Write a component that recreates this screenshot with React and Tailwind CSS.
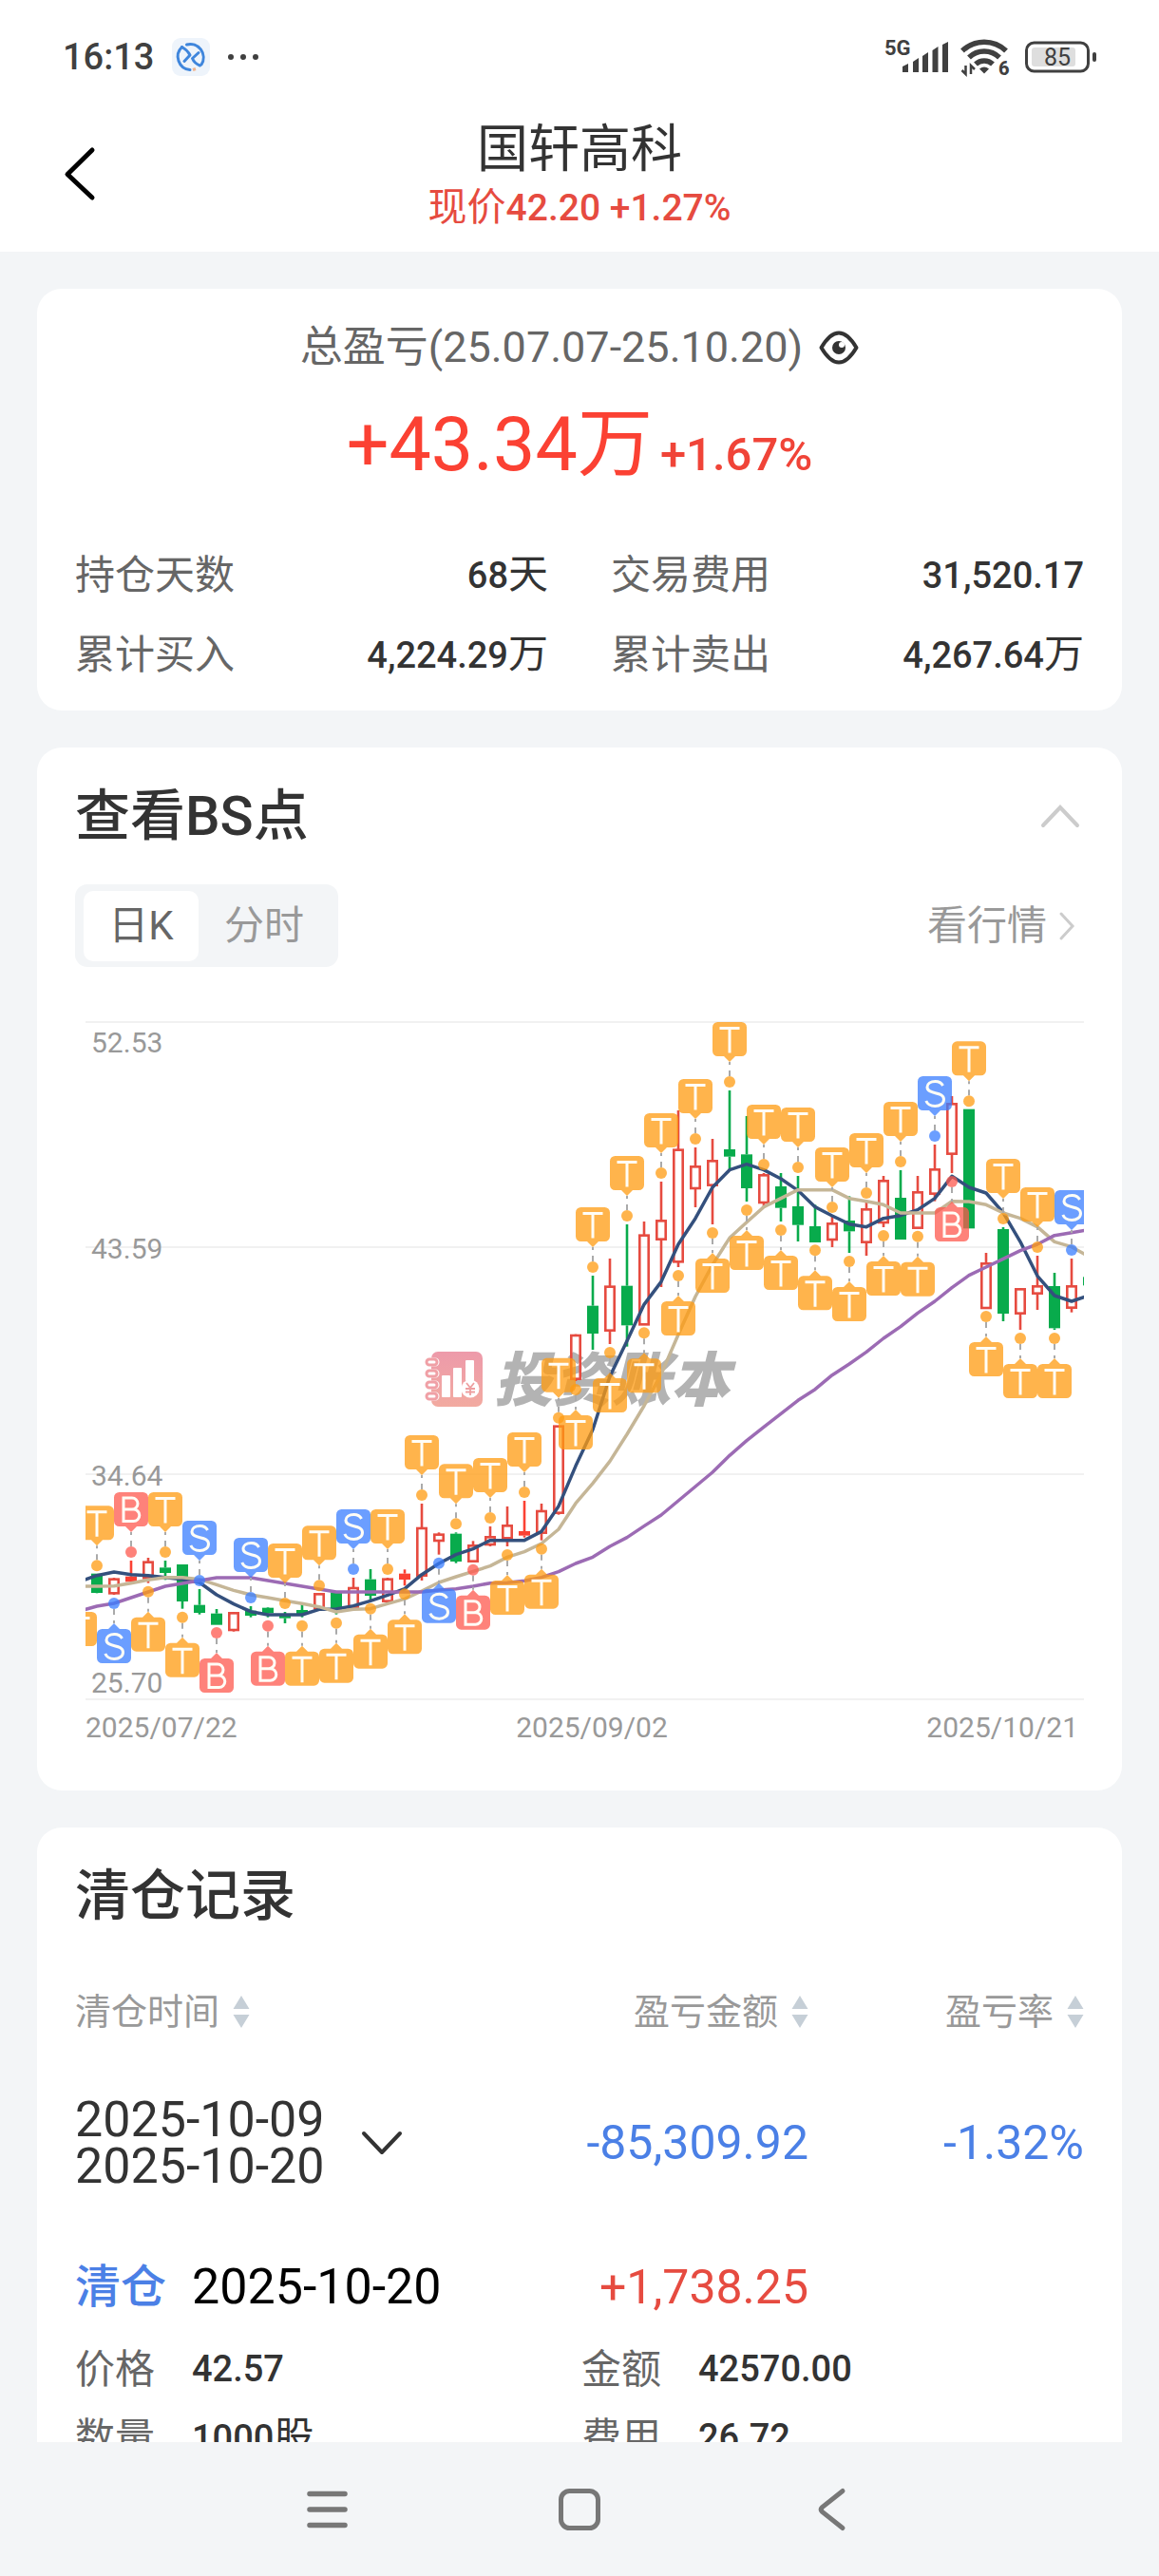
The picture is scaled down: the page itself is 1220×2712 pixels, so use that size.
import React from "react";

// Candle: [type, high, bodyTop, bodyBottom, low]; r = hollow rise, f = solid rise, g = fall.
// Vertical values are thirds of a pixel below the top of the plot.
const CANDLES = [
  ["g", 1792, 1790, 1851, 1852],
  ["r", 1803, 1808, 1852, 1857],
  ["f", 1749, 1799, 1816, 1816],
  ["r", 1740, 1754, 1804, 1820],
  ["g", 1749, 1771, 1788, 1810],
  ["g", 1761, 1761, 1878, 1901],
  ["g", 1839, 1889, 1914, 1919],
  ["g", 1902, 1916, 1952, 1950],
  ["r", 1911, 1915, 1968, 1973],
  ["g", 1893, 1907, 1923, 1928],
  ["g", 1896, 1898, 1915, 1928],
  ["g", 1911, 1923, 1931, 1947],
  ["g", 1887, 1905, 1920, 1928],
  ["r", 1855, 1855, 1900, 1908],
  ["g", 1848, 1850, 1910, 1919],
  ["r", 1803, 1836, 1897, 1900],
  ["g", 1776, 1808, 1860, 1874],
  ["r", 1803, 1808, 1877, 1882],
  ["f", 1777, 1790, 1809, 1828],
  ["r", 1569, 1647, 1796, 1812],
  ["r", 1660, 1667, 1686, 1730],
  ["g", 1660, 1664, 1752, 1757],
  ["r", 1687, 1702, 1751, 1751],
  ["r", 1641, 1675, 1698, 1704],
  ["r", 1578, 1639, 1678, 1704],
  ["f", 1560, 1656, 1670, 1676],
  ["r", 1569, 1593, 1661, 1685],
  ["r", 1325, 1325, 1598, 1604],
  ["r", 1034, 1038, 1175, 1182],
  ["g", 849, 944, 1032, 1083],
  ["r", 795, 884, 1022, 1065],
  ["g", 687, 881, 1006, 1073],
  ["r", 678, 722, 1003, 1003],
  ["r", 552, 676, 734, 885],
  ["r", 327, 452, 805, 822],
  ["r", 444, 505, 573, 633],
  ["r", 417, 487, 563, 687],
  ["g", 264, 450, 473, 515],
  ["g", 345, 466, 573, 615],
  ["r", 525, 532, 618, 630],
  ["g", 525, 567, 635, 678],
  ["g", 534, 630, 689, 741],
  ["g", 625, 693, 744, 742],
  ["r", 660, 685, 735, 759],
  ["g", 598, 675, 709, 777],
  ["r", 615, 640, 743, 786],
  ["r", 534, 550, 681, 696],
  ["g", 516, 603, 735, 735],
  ["r", 534, 586, 698, 698],
  ["r", 435, 514, 590, 614],
  ["r", 282, 307, 464, 525],
  ["g", 325, 323, 700, 700],
  ["r", 777, 811, 951, 951],
  ["g", 696, 702, 969, 993],
  ["r", 888, 892, 968, 1020],
  ["r", 786, 883, 905, 957],
  ["g", 840, 882, 1015, 1020],
  ["r", 795, 883, 950, 965],
  ["g", 853, 853, 880, 880],
];

const FAST = [1815, 1796, 1785, 1793, 1796, 1802, 1808, 1818, 1857, 1886, 1910, 1920, 1920, 1920, 1903, 1902, 1892, 1876, 1858, 1838, 1793, 1758, 1730, 1712, 1685, 1685, 1685, 1657, 1577, 1450, 1335, 1167, 1055, 940, 868, 750, 668, 570, 515, 497, 515, 543, 580, 632, 660, 686, 695, 668, 659, 641, 605, 535, 570, 588, 650, 742, 850, 912, 930, 912];
const MID = [1830, 1830, 1829, 1820, 1810, 1802, 1802, 1808, 1825, 1843, 1857, 1866, 1876, 1885, 1895, 1911, 1903, 1901, 1885, 1870, 1845, 1818, 1800, 1783, 1766, 1738, 1721, 1695, 1650, 1568, 1505, 1435, 1350, 1260, 1160, 1035, 915, 815, 730, 680, 632, 605, 578, 578, 578, 605, 614, 625, 651, 651, 651, 614, 615, 625, 651, 668, 695, 742, 758, 788];
const SLOW = [1908, 1893, 1884, 1866, 1848, 1830, 1821, 1812, 1803, 1803, 1803, 1812, 1821, 1830, 1839, 1848, 1848, 1848, 1848, 1848, 1848, 1842, 1838, 1830, 1820, 1819, 1813, 1802, 1784, 1758, 1738, 1704, 1676, 1640, 1605, 1560, 1515, 1470, 1417, 1370, 1327, 1285, 1243, 1208, 1163, 1128, 1090, 1047, 1010, 967, 930, 887, 848, 822, 796, 770, 750, 722, 713, 704];

const ABOVE = { 0: "T", 2: "B", 4: "T", 6: "S", 9: "S", 11: "T", 13: "T", 15: "S", 17: "T", 19: "T", 21: "T", 23: "T", 25: "T", 27: "T", 29: "T", 31: "T", 33: "T", 35: "T", 37: "T", 39: "T", 41: "T", 43: "T", 45: "T", 47: "T", 49: "S", 51: "T", 53: "T", 55: "T", 57: "S" };
const BELOW = { 1: "S", 3: "T", 5: "T", 7: "B", 10: "B", 12: "T", 14: "T", 16: "T", 18: "T", 20: "S", 22: "B", 24: "T", 26: "T", 28: "T", 30: "T", 32: "T", 34: "T", 36: "T", 38: "T", 40: "T", 42: "T", 44: "T", 46: "T", 48: "T", 50: "B", 52: "T", 54: "T", 56: "T" };

const MARK = { T: "#ff9b10", S: "#397eff", B: "#fe584e" };
const cx = (i) => 12 + 18 * i;
const points = (list) => list.map((v, k) => `${cx(k - 1)},${v / 3}`).join(" ");

function Candle({ i, data }) {
  const [type, high, top, bottom, low] = data;
  const x = cx(i);
  const color = type === "g" ? "#08ab4c" : type === "f" ? "#fb4133" : "#e64b40";
  const t = top / 3;
  const b = bottom / 3;
  return (
    <g stroke={color} strokeWidth="2.600">
      {high < top && <line x1={x} x2={x} y1={high / 3} y2={t} />}
      {low > bottom && <line x1={x} x2={x} y1={b} y2={low / 3} />}
      {type === "r" ? (
        <rect x={x - 4.7} y={t} width="9.400" height={b - t} fill="none" />
      ) : (
        <rect x={x - 6} y={t} width="12" height={b - t} fill={color} stroke="none" />
      )}
    </g>
  );
}

function Glyph({ kind, x, y }) {
  if (kind === "T") return <path d={`M${x - 10.5} ${y + 6.5}h21M${x} ${y + 6.5}v26`} />;
  if (kind === "B")
    return <path d={`M${x - 8} ${y + 6}h9a6 6 0 0 1 0 12h-9zM${x - 8} ${y + 18}h10.5a6.3 6.3 0 0 1 0 12.600h-10.500z`} />;
  return <path d={`M${x + 8.500} ${y + 10}c-1.500-3-4.500-4.500-8-4.500c-5 0-8.500 2.500-8.500 6c0 8.500 17.500 4 17.500 13c0 4-4 7-9.200 7c-4.500 0-8-2-9.500-5.500`} />;
}

function Marker({ i, kind, level, below }) {
  const x = cx(i);
  const dot = level / 3 + (below ? 9 : -9);
  const boxY = below ? dot + 27 : dot - 63;
  const edge = below ? boxY : boxY + 36;
  const tip = below ? edge - 6 : edge + 6;
  const dotEdge = below ? dot + 6 : dot - 6;
  return (
    <g>
      <line x1={x} x2={x} y1={tip} y2={dotEdge} stroke="#aaa" strokeWidth="2" strokeDasharray="3 6 6 0" />
      <g fill={MARK[kind]} fillOpacity="0.75">
        <circle cx={x} cy={dot} r="6" />
        <path d={`M${x - 12.5} ${boxY}h25a5.500 5.500 0 0 1 5.500 5.500v25a5.500 5.500 0 0 1 -5.500 5.500h-25a5.500 5.500 0 0 1 -5.500 -5.500v-25a5.500 5.500 0 0 1 5.500 -5.500zM${x - 6} ${edge}L${x} ${tip}L${x + 6} ${edge}z`} />
      </g>
      <g fill="none" stroke="#fffdf6" strokeWidth="3">
        <Glyph kind={kind} x={x} y={boxY} />
      </g>
    </g>
  );
}

function Watermark() {
  return (
    <g>
      <defs>
        <linearGradient id="book" x1="0" y1="0" x2="0" y2="1">
          <stop offset="0" stopColor="#ed9aaa" />
          <stop offset="1" stopColor="#f2aaa0" />
        </linearGradient>
      </defs>
      <rect x="364" y="363" width="54" height="58" rx="7" fill="url(#book)" />
      <g fill="#fff" stroke="#fff" strokeWidth="5">
        {[374, 386, 398, 410].map((y) => (
          <rect key={y} x="362" y={y - 2} width="8" height="4" rx="2" />
        ))}
      </g>
      <g fill="#fff" stroke="#f0a0a6" strokeWidth="3">
        {[374, 386, 398, 410].map((y) => (
          <rect key={y} x="359" y={y - 3} width="11" height="6" rx="3" />
        ))}
      </g>
      <g fill="#fff">
        <rect x="375" y="388" width="9" height="23" rx="1" />
        <rect x="387" y="380" width="9" height="31" rx="1" />
        <rect x="400" y="372" width="9" height="22" rx="1" />
        <circle cx="405" cy="402" r="9.500" />
      </g>
      <path d="M401 396l4 5l4-5M405 401v8M400 402h10M400 405.500h10" fill="none" stroke="#ee9fa0" strokeWidth="1.800" />
      <text x="430" y="415" fontSize="62" fontStyle="italic" fontWeight="900" fill="#b3b3b3" fontFamily="'Noto Sans CJK SC', sans-serif">
        投资账本
      </text>
    </g>
  );
}

function Chart() {
  const prices = [
    ["52.53", 16, 48],
    ["43.59", 253, 265],
    ["34.64", 492, 504],
    ["25.70", 729, 722],
  ];
  return (
    <svg viewBox="0 0 1051 785" className="block w-full" role="img" aria-label="日K线与买卖点">
      {prices.map(([p, y]) => (
        <line key={p} x1="0" x2="1051" y1={y} y2={y} stroke="#f1f1f1" strokeWidth="2" />
      ))}
      <Watermark />
      <g fill="#999" fontSize="30" fontFamily="Roboto, sans-serif">
        {prices.map(([p, , y]) => (
          <text key={p} x="6" y={y}>{p}</text>
        ))}
        <text x="0" y="769">2025/07/22</text>
        <text x="533" y="769" textAnchor="middle">2025/09/02</text>
        <text x="1045" y="769" textAnchor="end">2025/10/21</text>
      </g>
      {CANDLES.map((c, i) => <Candle key={i} i={i} data={c} />)}
      <g fill="none" strokeWidth="3.500" strokeLinejoin="round">
        <polyline points={points(FAST)} stroke="#34507d" />
        <polyline points={points(MID)} stroke="#c5b697" />
        <polyline points={points(SLOW)} stroke="#9c6bb4" />
      </g>
      <Marker i={-1} kind="T" level={1803} below />
      {CANDLES.map((c, i) =>
        ABOVE[i] ? <Marker key={i} i={i} kind={ABOVE[i]} level={c[1]} /> : BELOW[i] ? <Marker key={i} i={i} kind={BELOW[i]} level={c[4]} below /> : null
      )}
    </svg>
  );
}

function StatusBar() {
  return (
    <div className="flex h-[120px] items-center justify-between pl-[66px] pr-[65px] text-[#404040]">
      <div className="flex items-center">
        <time className="w-[115px] text-[38px] leading-[48px] font-medium">16:13</time>
        <svg width="40" height="40" viewBox="0 0 40 40" aria-hidden="true">
          <rect width="40" height="40" rx="9" fill="#eef4fb" />
          <path d="M22 33.500l3-1" stroke="#f2b48c" strokeWidth="3" />
          <g fill="none" stroke="#3f86dc" strokeWidth="3" strokeLinecap="round" strokeLinejoin="round">
            <path d="M15.500 7a14 14 0 0 1 15.500 21" />
            <path d="M10.500 9.500a14 14 0 0 0 8.500 24" />
            <path d="M10.500 9.500q6 3.500 8.500 8.500l-6 6.500" />
            <path d="M28 15.500l-6.500 6q2 5 8 7.500" />
          </g>
        </svg>
        <svg className="ml-[18px]" width="36" height="8" viewBox="0 0 36 8" fill="#404040" aria-hidden="true">
          <circle cx="4" cy="4" r="3" /><circle cx="17" cy="4" r="3" /><circle cx="30" cy="4" r="3" />
        </svg>
      </div>
      <div className="flex items-center">
        <svg className="overflow-visible" width="66" height="40" viewBox="0 0 66 40" fill="#404040" role="img" aria-label="5G">
          <text x="-2" y="18" fontSize="22" fontWeight="700" fontFamily="Roboto, sans-serif">5G</text>
          <path d="M17 30l6-3v9h-6zM28 25l6-4v15h-6zM38 19l6-4v21h-6zM48.500 13l6-4v27h-6zM59 7l6-3v32h-6z" strokeLinejoin="round" />
        </svg>
        <svg className="ml-3 overflow-visible" width="54" height="40" viewBox="0 0 54 40" role="img" aria-label="Wi-Fi">
          <g fill="none" stroke="#404040" strokeWidth="5.500">
            <path d="M2 13.500a33 33 0 0 1 46 0" />
            <path d="M9 20.500a23 23 0 0 1 32 0" />
            <path d="M16 27.500a13 13 0 0 1 18 0" />
          </g>
          <path d="M20 32.500q5-4 10 0l-5 5z" fill="#404040" />
          <path d="M5.500 29v9l-4-4M11 38v-9l4 4" fill="none" stroke="#404040" strokeWidth="2.500" />
          <text x="40" y="39" fontSize="20" fontWeight="800" fill="#404040" fontFamily="Roboto, sans-serif">6</text>
        </svg>
        <svg className="ml-3" width="78" height="36" viewBox="0 0 78 36" role="img" aria-label="85%">
          <rect x="9" y="8" width="46" height="20" rx="3" fill="#dedede" />
          <rect x="3.500" y="3" width="65" height="30" rx="8" fill="none" stroke="#404040" strokeWidth="3" />
          <rect x="73" y="13" width="4" height="10" rx="2" fill="#404040" />
          <text x="36" y="27" fontSize="25" textAnchor="middle" fill="#404040" fontFamily="Roboto, sans-serif">85</text>
        </svg>
      </div>
    </div>
  );
}

function Stat({ label, value, unit }) {
  return (
    <div className="flex items-center justify-between leading-[60px]">
      <dt className="text-[42px] text-[#666]">{label}</dt>
      <dd className="text-[38px] font-medium">
        {value}
        {unit && <span className="text-[42px] font-normal">{unit}</span>}
      </dd>
    </div>
  );
}

function SortButton({ children }) {
  return (
    <button type="button" className="inline-flex items-center gap-[14px] align-top">
      {children}
      <svg width="18" height="34" viewBox="0 0 18 34" fill="#c6cfd7" aria-hidden="true">
        <path d="M9 0l8.500 14h-17zM9 34l8.500-14h-17z" />
      </svg>
    </button>
  );
}

function Detail({ label, value, unit }) {
  return (
    <div className="flex items-center leading-[71px]">
      <dt className="w-[123px] text-[42px] text-[#666]">{label}</dt>
      <dd className="text-[38px] font-medium">
        {value}
        {unit && <span className="text-[42px] font-normal">{unit}</span>}
      </dd>
    </div>
  );
}

export default function App() {
  return (
    <div className="flex h-screen flex-col bg-[#f3f5f7] font-[Roboto,'Noto_Sans_CJK_SC',sans-serif] text-[#333]">
      <header className="shrink-0 bg-white">
        <StatusBar />
        <div className="grid h-[145px] grid-cols-[1fr_auto_1fr]">
          <div className="pl-[66px] pt-[34px]">
            <button type="button" aria-label="返回" className="block">
              <svg width="36" height="58" viewBox="0 0 36 58" fill="none" stroke="#000" strokeWidth="5" strokeLinecap="round" strokeLinejoin="round">
                <path d="M31 4L5 29.500L31 54" />
              </svg>
            </button>
          </div>
          <div className="pt-1 text-center">
            <h1 className="text-[54px] leading-[68px]">国轩高科</h1>
            <p className="text-[39px] leading-[52px] font-medium text-[#e64b40]">
              <span className="text-[41px] font-normal">现价</span>42.20 +1.27%
            </p>
          </div>
        </div>
      </header>

      <main className="flex min-h-0 flex-1 flex-col gap-[39px] overflow-y-auto px-[39px] pt-[39px] [scrollbar-width:none]">
        <section className="shrink-0 rounded-[26px] bg-white px-10 pt-8 pb-7">
          <div className="flex items-center justify-center gap-[17px]">
            <h2 className="text-[45px] leading-[60px] text-[#666]">总盈亏(25.07.07-25.10.20)</h2>
            <button type="button" aria-label="隐藏金额">
              <svg width="42" height="36" viewBox="0 0 42 36" className="block" aria-hidden="true">
                <path d="M2.500 18C9 7 15 2.500 21 2.500S33 7 39.500 18C33 29 27 33.500 21 33.500S9 29 2.500 18z" fill="none" stroke="#333" strokeWidth="4" strokeLinejoin="round" />
                <circle cx="21" cy="18" r="7" fill="#333" />
                <circle cx="24" cy="15" r="3" fill="#fff" />
              </svg>
            </button>
          </div>
          <p className="mt-[22px] flex items-baseline justify-center gap-2 text-[#fb4133]">
            <span className="text-[79px] leading-[100px]">+43.34万</span>
            <span className="text-[49px] font-medium text-[#f04438]">+1.67%</span>
          </p>
          <dl className="mt-[57px] grid grid-cols-2 gap-x-[66px] gap-y-[23px]">
            <Stat label="持仓天数" value="68" unit="天" />
            <Stat label="交易费用" value="31,520.17" />
            <Stat label="累计买入" value="4,224.29" unit="万" />
            <Stat label="累计卖出" value="4,267.64" unit="万" />
          </dl>
        </section>

        <section className="shrink-0 rounded-[26px] bg-white px-10 pt-8 pb-10">
          <div className="flex items-center justify-between">
            <h2 className="text-[58px] leading-[80px] font-medium">查看BS点</h2>
            <button type="button" aria-label="收起" className="mr-1">
              <svg width="42" height="26" viewBox="0 0 42 26" fill="none" stroke="#ccc" strokeWidth="4" strokeLinecap="round">
                <path d="M3 23L21 4L39 23" />
              </svg>
            </button>
          </div>
          <div className="mt-8 flex items-center justify-between">
            <div className="flex h-[87px] items-center rounded-[13px] bg-[#f3f5f7] px-[9px] text-[42px]">
              <button type="button" className="h-[74px] w-[121px] rounded-[10px] bg-white text-[#666]">日K</button>
              <button type="button" className="h-[74px] w-[138px] text-[#999]">分时</button>
            </div>
            <a href="#quote" className="mr-[9px] flex items-center gap-[12px] text-[42px] leading-[60px] text-[#999]">
              看行情
              <svg width="18" height="32" viewBox="0 0 18 32" fill="none" stroke="#ccc" strokeWidth="3" strokeLinecap="round" aria-hidden="true">
                <path d="M3 3L15 16L3 29" />
              </svg>
            </a>
          </div>
          <div className="mt-[42px] pl-[11px]">
            <Chart />
          </div>
        </section>

        <section className="shrink-0 rounded-[26px] bg-white px-10 pt-8 pb-10">
          <h2 className="text-[58px] leading-[80px] font-medium">清仓记录</h2>
          <table className="mt-[57px] w-full table-fixed">
            <colgroup>
              <col />
              <col className="w-[260px]" />
              <col className="w-[290px]" />
            </colgroup>
            <thead className="text-[38px] leading-[50px] text-[#999]">
              <tr>
                <th className="p-0 text-left font-normal"><SortButton>清仓时间</SortButton></th>
                <th className="p-0 text-right font-normal"><SortButton>盈亏金额</SortButton></th>
                <th className="p-0 text-right font-normal"><SortButton>盈亏率</SortButton></th>
              </tr>
            </thead>
            <tbody className="text-[50px]">
              <tr>
                <td className="pt-[64px] pb-0">
                  <div className="flex items-center gap-[37px]">
                    <div className="text-[52px] leading-[49px]">
                      <div>2025-10-09</div>
                      <div>2025-10-20</div>
                    </div>
                    <button type="button" aria-label="展开">
                      <svg width="46" height="28" viewBox="0 0 46 28" fill="none" stroke="#333" strokeWidth="4" strokeLinecap="round" strokeLinejoin="round">
                        <path d="M4 4L23 24L42 4" />
                      </svg>
                    </button>
                  </div>
                </td>
                <td className="pt-[64px] pb-0 text-right text-[#4b80e6]">-85,309.92</td>
                <td className="pt-[64px] pb-0 text-right text-[#4b80e6]">-1.32%</td>
              </tr>
              <tr className="leading-[60px]">
                <td className="pt-[73px] pb-0 text-black">
                  <div className="flex items-center text-[52px]">
                    <span className="w-[123px] text-[48px] font-medium text-[#4b80e6]">清仓</span>
                    2025-10-20
                  </div>
                </td>
                <td className="pt-[73px] pb-0 text-right text-[#e64b40]">+1,738.25</td>
                <td />
              </tr>
            </tbody>
          </table>
          <dl className="mt-[21px] grid grid-cols-2 gap-x-1">
            <Detail label="价格" value="42.57" />
            <Detail label="金额" value="42570.00" />
            <Detail label="数量" value="1000" unit="股" />
            <Detail label="费用" value="26.72" />
          </dl>
        </section>
      </main>

      <nav className="flex h-[141px] shrink-0 items-center justify-center gap-[217px]" aria-label="系统导航">
        <button type="button" aria-label="最近任务">
          <svg width="48" height="48" viewBox="0 0 48 48" className="block" stroke="#777" strokeWidth="5.500" strokeLinecap="round">
            <path d="M5 7.500h37M5 24h37M5 40.500h37" />
          </svg>
        </button>
        <button type="button" aria-label="主屏幕">
          <svg width="48" height="48" viewBox="0 0 48 48" className="block" fill="none" stroke="#777" strokeWidth="5">
            <rect x="4.500" y="4.500" width="39" height="39" rx="9" />
          </svg>
        </button>
        <button type="button" aria-label="后退">
          <svg width="48" height="48" viewBox="0 0 48 48" className="block" fill="none" stroke="#777" strokeWidth="5" strokeLinecap="round">
            <path d="M36 4.500L14.500 21.500Q12 24 14.500 26.500L36 43.500" />
          </svg>
        </button>
      </nav>
    </div>
  );
}
